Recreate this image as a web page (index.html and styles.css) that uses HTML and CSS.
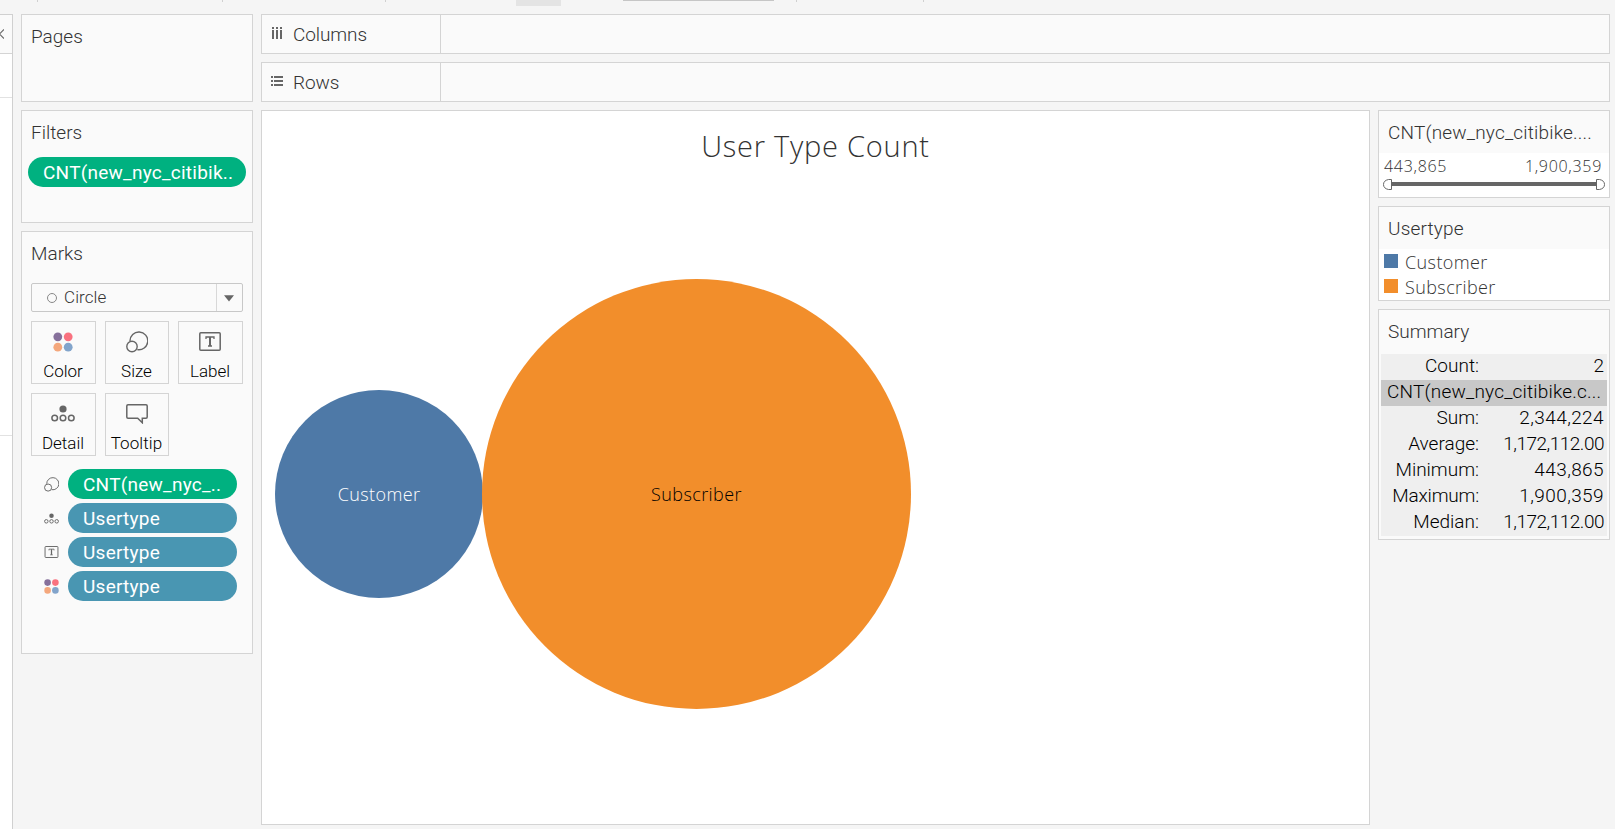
FILE: index.html
```html
<!DOCTYPE html>
<html lang="en">
<head>
<meta charset="utf-8">
<title>User Type Count</title>
<link rel="stylesheet" href="styles.css">
</head>
<body>
<svg class="defs" width="0" height="0">
  <symbol id="i-color" viewBox="0 0 20 20"><circle cx="4.8" cy="4.8" r="4.4" fill="#86709b"/><circle cx="15.2" cy="4.8" r="4.4" fill="#f9717f"/><circle cx="4.8" cy="15.2" r="4.4" fill="#f4a77c"/><circle cx="15.2" cy="15.2" r="4.4" fill="#82a4cb"/></symbol>
  <symbol id="i-size" viewBox="0 0 22 22"><g fill="none" stroke="#666" stroke-width="1.4"><path d="M4 10A8.900 8.900 0 1 1 11.300 18.600"/><circle cx="6" cy="15.500" r="5.200"/></g></symbol>
  <symbol id="i-label" viewBox="0 0 22 19"><rect x=".8" y=".8" width="20.4" height="17.4" rx="1" fill="none" stroke="#666" stroke-width="1.5"/><path d="M7 7V5h8v2M9 14h4" fill="none" stroke="#666" stroke-width="1.3"/><path d="M11 5v9" stroke="#666" stroke-width="2"/></symbol>
  <symbol id="i-detail" viewBox="0 0 24 17"><circle cx="12" cy="4" r="3.6" fill="#666"/><g fill="none" stroke="#666" stroke-width="1.5"><circle cx="3.700" cy="13" r="2.800"/><circle cx="12" cy="13" r="2.800"/><circle cx="20.300" cy="13" r="2.800"/></g></symbol>
  <symbol id="i-tooltip" viewBox="0 0 22 20"><path d="M2 .8h18q1.200 0 1.200 1.200v11q0 1.200-1.200 1.200h-3.700v4.500l-4.600-4.500H2Q.8 14.200.8 13V2Q.8.8 2 .8z" fill="none" stroke="#666" stroke-width="1.5"/></symbol>
</svg>
<div class="toolbar">
  <i class="tick t1"></i><i class="tick t2"></i><i class="tick t3"></i><i class="pressed"></i><i class="field"></i><i class="tick t4"></i><i class="tick t5"></i>
</div>
<main class="workspace">
  <aside class="data-pane">
    <div class="pane-head"><svg width="4" height="10" viewBox="0 0 4 10"><path d="M4 .5-.5 5 4 9.500" fill="none" stroke="#666" stroke-width="1.2"/></svg></div>
    <div class="pane-search"></div>
    <div class="pane-dims"></div>
  </aside>

  <section class="cards">
    <div class="card pages"><h2>Pages</h2></div>
    <div class="card filters"><h2>Filters</h2>
      <div class="pill green wide"><span>CNT(new_nyc_citibik..</span></div>
    </div>
    <div class="card marks"><h2>Marks</h2>
      <div class="select"><i class="ring"></i><span>Circle</span><b><svg width="10" height="7"><path d="M0 .3h10L5 6.500z" fill="#666"/></svg></b></div>
      <div class="buttons">
        <div class="btn"><svg width="20" height="20"><use href="#i-color"/></svg><span>Color</span></div>
        <div class="btn"><svg width="22" height="22"><use href="#i-size"/></svg><span>Size</span></div>
        <div class="btn"><svg width="22" height="19"><use href="#i-label"/></svg><span>Label</span></div>
        <div class="btn"><svg width="24" height="17"><use href="#i-detail"/></svg><span>Detail</span></div>
        <div class="btn"><svg width="22" height="20"><use href="#i-tooltip"/></svg><span class="tight">Tooltip</span></div>
      </div>
      <div class="encodings">
        <div class="enc"><svg width="15" height="15"><use href="#i-size"/></svg><div class="pill green"><span>CNT(new_nyc_..</span></div></div>
        <div class="enc"><svg width="15" height="11"><use href="#i-detail"/></svg><div class="pill blue"><span>Usertype</span></div></div>
        <div class="enc"><svg width="14" height="12"><use href="#i-label"/></svg><div class="pill blue"><span>Usertype</span></div></div>
        <div class="enc"><svg width="15" height="15"><use href="#i-color"/></svg><div class="pill blue"><span>Usertype</span></div></div>
      </div>
    </div>
  </section>

  <section class="sheet">
    <div class="shelf"><div class="shelf-name"><svg width="12" height="12"><path d="M1 0h2v2H1zM5 0h2v2H5zM9 0h2v2H9zM1 3h2v9H1zM5 3h2v9H5zM9 3h2v9H9z" fill="#666"/></svg><span>Columns</span></div></div>
    <div class="shelf"><div class="shelf-name"><svg width="12" height="12"><path d="M0 1h2v2H0zM0 5h2v2H0zM0 9h2v2H0zM3 1h9v2H3zM3 5h9v2H3zM3 9h9v2H3z" fill="#666"/></svg><span>Rows</span></div></div>
    <div class="columns">
      <div class="view">
        <h1>User Type Count</h1>
        <div class="bubble customer"><span>Customer</span></div>
        <div class="bubble subscriber"><span>Subscriber</span></div>
      </div>
      <div class="legends">
        <div class="card range">
          <h2 class="roomy">CNT(new_nyc_citibike....</h2>
          <div class="ends"><span>443,865</span><span>1,900,359</span></div>
          <svg class="slider" width="222" height="11"><path d="M8 5h206" stroke="#666" stroke-width="4"/><g fill="#fff" stroke="#666"><path d="M8.500.5H5.500Q.5 1.500.5 5.500T5.500 10.500H8.500z"/><path d="M213.500.5H216.500Q221.500 1.500 221.500 5.500T216.500 10.500H213.500z"/></g></svg>
        </div>
        <div class="card legend">
          <h2 class="roomy">Usertype</h2>
          <div class="key"><i class="sw c1"></i><span>Customer</span></div>
          <div class="key"><i class="sw c2"></i><span>Subscriber</span></div>
        </div>
        <div class="card summary">
          <h2>Summary</h2>
          <dl>
            <div><dt>Count:</dt><dd>2</dd></div>
            <div class="measure"><span>CNT(new_nyc_citibike.c...</span></div>
            <div><dt>Sum:</dt><dd class="open">2,344,224</dd></div>
            <div><dt>Average:</dt><dd class="close">1,172,112.00</dd></div>
            <div><dt>Minimum:</dt><dd class="open">443,865</dd></div>
            <div><dt class="close-label">Maximum:</dt><dd class="open">1,900,359</dd></div>
            <div><dt>Median:</dt><dd class="close">1,172,112.00</dd></div>
          </dl>
        </div>
      </div>
    </div>
  </section>
</main>
</body>
</html>
```
FILE: styles.css
```css
* { box-sizing: border-box; margin: 0; padding: 0; }
body { width: 1615px; height: 829px; overflow: hidden; background: #f5f5f5; font: 300 19px/24px Roboto, "Liberation Sans", sans-serif; color: #333; }
span, h1, h2, dt, dd { white-space: nowrap; }
svg { display: block; flex: none; }
.defs { position: absolute; }
.toolbar { height: 14px; display: flex; align-items: flex-start; }
.toolbar i { flex: none; }
.tick { width: 1px; height: 2px; background: #d0d0d0; }
.t1 { margin-left: 37px; }
.t2 { margin-left: 184px; }
.t3 { margin-left: 162px; }
.pressed { width: 45px; height: 6px; margin-left: 130px; background: #e4e4e4; }
.field { width: 151px; height: 1px; margin-left: 62px; background: #c6c6c6; }
.t4 { margin-left: 22px; }
.t5 { margin-left: 126px; }
.workspace { display: flex; height: 815px; align-items: flex-start; }
.data-pane { width: 13px; height: 815px; flex: none; border: solid #d0d0d0; border-width: 1px 1px 0 0; background: #fff; }
.pane-head { height: 39px; padding-top: 14px; background: #fafafa; border-bottom: 1px solid #d4d4d4; }
.pane-search { height: 44px; border-bottom: 1px solid #e2e2e2; }
.pane-dims { height: 338px; border-bottom: 1px solid #e2e2e2; }
.cards { width: 232px; margin-left: 8px; display: flex; flex-direction: column; gap: 8px; }
.card { background: #fafafa; border: 1px solid #d4d4d4; }
h2 { font: inherit; padding: 10px 0 0 9px; }
.pages { height: 88px; }
.filters { height: 113px; }
.marks { height: 423px; }
.pill { height: 30px; width: 169px; border-radius: 15px; padding-left: 15px; line-height: 31px; color: #fff; font-weight: 400; letter-spacing: .25px; }
.green { background: #00b180; }
.blue { background: #4996b2; }
.wide { width: 218px; margin: 12px 0 0 6px; }
.select { display: flex; align-items: center; width: 212px; height: 29px; margin: 17px 0 0 9px; border: 1px solid #c8c8c8; border-radius: 2px; font-size: 17px; }
.select span { padding-bottom: 2px; letter-spacing: .1px; }
.ring { width: 10px; height: 10px; margin: 0 7px 0 15px; border: 1px solid #888; border-radius: 50%; }
.select b { width: 26px; height: 27px; margin-left: auto; padding: 11px 0 0 7px; border-left: 1px solid #d8d8d8; }
.buttons { display: grid; grid-template-columns: 65px 64px 65px; gap: 9px; margin: 9px 0 0 9px; color: #000; font-size: 17px; }
.btn { height: 63px; padding-right: 1px; border: 1px solid #d4d4d4; display: grid; grid-template-rows: 39px 20px; justify-items: center; align-items: center; line-height: 20px; }
.tight { letter-spacing: .1px; }
.encodings { display: flex; flex-direction: column; gap: 4px; margin: 13px 0 0 22px; }
.enc { display: flex; align-items: center; gap: 9px; }
.enc svg { width: 15px; }
.sheet { width: 1349px; margin-left: 8px; display: flex; flex-direction: column; gap: 8px; }
.shelf { height: 40px; background: #fafafa; border: 1px solid #d4d4d4; display: flex; }
.shelf-name { width: 179px; display: flex; align-items: center; gap: 10px; padding: 1px 0 0 9px; border-right: 1px solid #d4d4d4; letter-spacing: -.1px; }
.shelf-name svg { margin-top: -3px; }
.columns { display: flex; gap: 8px; align-items: flex-start; }
.view { position: relative; width: 1109px; height: 715px; background: #fff; border: 1px solid #d4d4d4; }
h1 { font: 300 29px/40px "Open Sans", "Noto Sans", sans-serif; letter-spacing: .75px; text-align: center; padding-top: 15px; }
.bubble { position: absolute; border-radius: 50%; display: flex; align-items: center; justify-content: center; font: 300 18px/24px "Open Sans", "Noto Sans", sans-serif; letter-spacing: .4px; }
.customer { left: 13px; top: 279px; width: 208px; height: 208px; background: #4e79a7; color: #fff; }
.subscriber { left: 220px; top: 168px; width: 429px; height: 430px; background: #f28e2b; color: #000; }
.legends { width: 232px; display: flex; flex-direction: column; gap: 8px; }
.range, .legend { background: #fff; }
.range h2, .legend h2 { height: 42px; background: #fafafa; }
.roomy { letter-spacing: .18px; }
.range { height: 88px; }
.ends { display: flex; justify-content: space-between; height: 26px; padding: 1px 7px 0 5px; font: 300 16px/24px "Open Sans", "Noto Sans", sans-serif; letter-spacing: .7px; }
.slider { margin: 0 0 0 4px; }
.legend { height: 95px; }
.key { display: flex; height: 25px; padding: 1px 0 0 5px; color: #333; font: 300 18px/24px "Open Sans", "Noto Sans", sans-serif; letter-spacing: .4px; }
.sw { width: 14px; height: 14px; margin: 4px 7px 0 0; }
.c1 { background: #4e79a7; }
.c2 { background: #f28e2b; }
.summary { height: 231px; }
.summary h2 { height: 44px; }
dl { width: 226px; margin-left: 2px; background: #efefef; color: #000; }
dl div { height: 26px; display: flex; line-height: 24px; padding-right: 3px; }
dt { width: 98px; text-align: right; }
dd { margin-left: auto; }
.open { letter-spacing: .4px; }
.close { letter-spacing: -.5px; }
.close-label { letter-spacing: -.2px; }
dl .measure { background: #c8c8c8; padding-left: 6px; letter-spacing: .2px; }
```
